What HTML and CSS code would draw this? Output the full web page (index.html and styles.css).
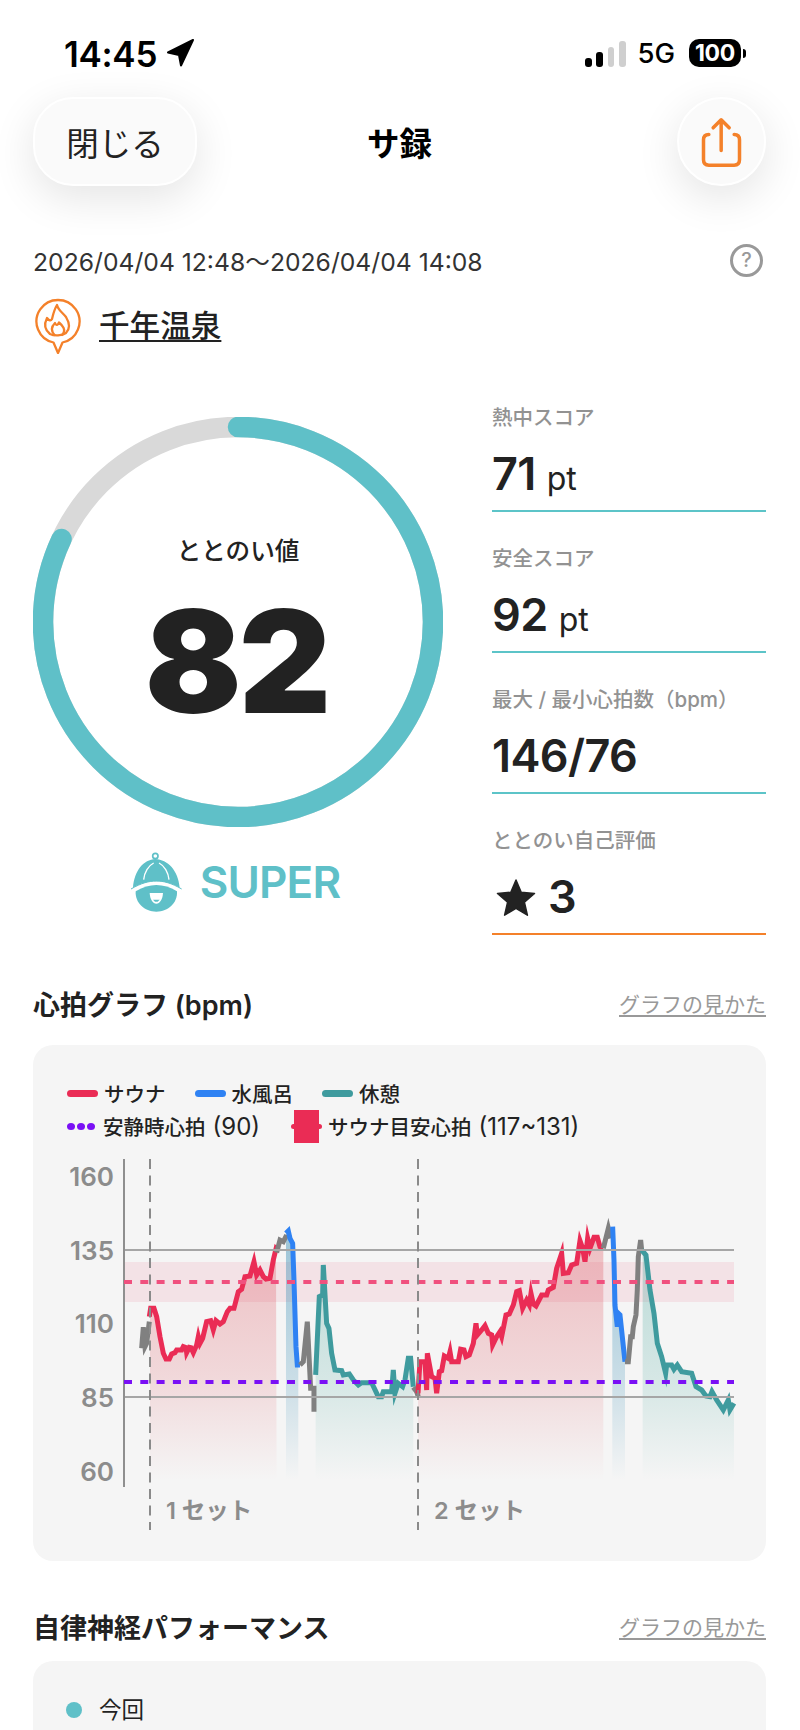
FILE: index.html
```html
<!DOCTYPE html>
<html lang="ja">
<head>
    <meta charset="UTF-8">
    <meta name="viewport" content="width=device-width, initial-scale=1.0">
    <title>サ録</title>
    <link rel="stylesheet" href="styles.css">
</head>
<body>
    <!-- Status bar -->
    <div class="status-bar">
        <div class="status-left">
            <span class="clock">14:45</span>
            <svg class="location" viewBox="0 0 32 32"><path d="M29 3 L4 15.500 L15 18 L17 28.500 Z"/></svg>
        </div>
        <div class="status-right">
            <div class="signal">
                <span class="bar bar-1"></span>
                <span class="bar bar-2"></span>
                <span class="bar bar-3 off"></span>
                <span class="bar bar-4 off"></span>
            </div>
            <span class="network">5G</span>
            <span class="battery">100</span>
            <span class="battery-nub"></span>
        </div>
    </div>

    <!-- Header -->
    <div class="nav">
        <button class="nav-close">閉じる</button>
        <div class="nav-title">サ録</div>
        <button class="nav-share">
            <svg viewBox="-7.500 -10.500 210 210" width="70" height="70">
                <path d="M58 72 H58 Q42 72 42 88 V148 Q42 164 58 164 H134 Q150 164 150 148 V88 Q150 72 134 72" class="share-line"/>
                <path d="M95 120 V30 M71 52 L95 28 L119 52" class="share-line"/>
            </svg>
        </button>
    </div>

    <div class="content">
        <div class="date-row">
            <span>2026/04/04 12:48～2026/04/04 14:08</span>
            <span class="help">?</span>
        </div>

        <div class="venue">
            <svg viewBox="0 0 46 56" width="46" height="56">
                <path class="pin" d="M23 55 L18.500 44.500 A21.500 21.500 0 1 1 27.500 44.500 Z"/>
                <path class="pin-flame" d="M22 7 C23 12 27 14 31 19 C34 24 36 30 31 35 C27 38 19 38 15 36 C10 32 9 26 12 20 C14 23 16 23 17 21 C18 17 19 12 22 7 Z"/>
                <path class="pin-flame" d="M19.500 37 C15 32 17 28 20 25 C21 28 23 27 24 24.500 C27 27 32 32 27 37"/>
            </svg>
            <a class="venue-name">千年温泉</a>
        </div>

        <!-- Score -->
        <div class="score">
            <div class="score-left">
                <div class="ring">
                    <svg class="ring-svg" viewBox="0 0 410 410">
                        <circle class="ring-track" cx="205" cy="205" r="195"/>
                        <circle class="ring-value" cx="205" cy="205" r="195" pathLength="100" stroke-dasharray="82 100" transform="rotate(-90 205 205)"/>
                    </svg>
                    <div class="ring-label">ととのい値</div>
                    <div class="ring-number">82</div>
                </div>
                <div class="rank">
                    <svg viewBox="0 0 210 210" width="70" height="70">
                        <circle class="hat-ball" cx="97" cy="27" r="8"/>
                        <path class="hat" d="M30 122 C34 70 62 38 97 36 C134 38 166 70 170 122 C145 108 122 103 100 103 C78 103 55 108 30 122 Z"/>
                        <path class="hat" d="M38 133 C60 120 80 114 100 114 C120 114 142 120 162 133 C164 168 136 194 100 194 C64 194 36 168 38 133 Z"/>
                        <path class="hat-brim" d="M24 126 C55 108 78 102 100 102 C122 102 145 108 176 126"/>
                        <path class="hat-seam" d="M62 98 C64 76 76 56 92 48 M138 98 C136 76 124 56 108 48"/>
                        <path class="hat-mouth" d="M80 138 H120 C119 158 110 170 100 170 C90 170 81 158 80 138 Z"/>
                        <path class="hat" d="M90 158 H110 L104 164 H96 Z"/>
                    </svg>
                    <span class="rank-name">SUPER</span>
                </div>
            </div>

            <div class="stats">
                <div class="stat">
                    <div class="stat-label">熱中スコア</div>
                    <div class="stat-value">71 <small>pt</small></div>
                </div>
                <div class="stat">
                    <div class="stat-label">安全スコア</div>
                    <div class="stat-value">92 <small>pt</small></div>
                </div>
                <div class="stat">
                    <div class="stat-label">最大 / 最小心拍数（bpm）</div>
                    <div class="stat-value">146/76</div>
                </div>
                <div class="stat stat-orange">
                    <div class="stat-label">ととのい自己評価</div>
                    <div class="stat-value">
                        <svg class="star" viewBox="0 0 40 40"><path d="M20 2 L25.200 14.300 L38.500 15.400 L28.400 24.100 L31.400 37.200 L20 30.300 L8.600 37.200 L11.600 24.100 L1.500 15.400 L14.800 14.300 Z"/></svg>
                        3
                    </div>
                </div>
            </div>
        </div>

        <!-- Heart rate graph -->
        <div class="section-head head-graph">
            <h2>心拍グラフ (bpm)</h2>
            <a class="graph-help">グラフの見かた</a>
        </div>
        <div class="card">
            <div class="legend">
                <div class="legend-row">
                    <span class="legend-item"><i class="swatch red"></i>サウナ</span>
                    <span class="legend-item"><i class="swatch blue"></i>水風呂</span>
                    <span class="legend-item"><i class="swatch teal"></i>休憩</span>
                </div>
                <div class="legend-row">
                    <span class="legend-item"><i class="dots"><b></b><b></b><b></b></i>安静時心拍<span class="legend-num">(90)</span></span>
                    <span class="legend-item"><i class="target"></i>サウナ目安心拍<span class="legend-num">(117~131)</span></span>
                </div>
            </div>
            <svg class="chart" viewBox="33 1150 733 411" width="733" height="411">
                <defs>
                    <linearGradient id="fillRed" gradientUnits="userSpaceOnUse" x1="0" y1="200" x2="0" y2="900">
                        <stop offset="0" stop-color="#d9323f" stop-opacity=".27"/>
                        <stop offset=".55" stop-color="#d9323f" stop-opacity=".15"/>
                        <stop offset="1" stop-color="#d9323f" stop-opacity="0"/>
                    </linearGradient>
                    <linearGradient id="fillBlue" gradientUnits="userSpaceOnUse" x1="0" y1="200" x2="0" y2="900">
                        <stop offset="0" stop-color="#2a86b0" stop-opacity=".42"/>
                        <stop offset=".6" stop-color="#2a86b0" stop-opacity=".2"/>
                        <stop offset="1" stop-color="#2a86b0" stop-opacity="0"/>
                    </linearGradient>
                    <linearGradient id="fillTeal" gradientUnits="userSpaceOnUse" x1="0" y1="200" x2="0" y2="900">
                        <stop offset="0" stop-color="#2f9c90" stop-opacity=".3"/>
                        <stop offset=".6" stop-color="#2f9c90" stop-opacity=".15"/>
                        <stop offset="1" stop-color="#2f9c90" stop-opacity="0"/>
                    </linearGradient>
                </defs>

                <rect class="band" x="124" y="1262" width="610" height="40"/>

                <!-- first set, points from left part -->
                <g transform="translate(30 1180) scale(.3333)">
                    <polygon fill="url(#fillRed)" points="360,410 362,385 372,385 380,410 390,470 400,520 408,537 418,537 425,522 435,518 440,510 455,510 460,500 468,503 470,518 478,502 483,503 490,518 500,495 505,470 510,490 518,475 530,425 542,422 550,450 558,422 570,432 580,425 592,395 600,385 612,385 625,335 635,328 645,290 660,288 672,245 680,285 690,270 700,290 708,297 720,295 730,240 738,207 740,900 360,900"/>
                    <polygon fill="url(#fillBlue)" points="768,160 775,153 780,175 788,190 792,300 798,500 805,555 805,900 768,900"/>
                    <polygon fill="url(#fillTeal)" points="857,585 868,350 878,345 880,255 890,430 897,445 905,520 915,570 935,572 940,585 958,582 970,600 985,615 995,608 1025,608 1045,650 1055,650 1060,635 1085,635 1090,570 1095,640 1105,610 1118,620 1125,600 1135,535 1142,535 1150,620 1150,900 857,900"/>
                    <polyline class="line gray" points="335,505 340,442 345,500 350,490 358,425"/>
                    <polyline class="line red" points="358,410 362,385 372,385 380,410 390,470 400,520 408,537 418,537 425,522 435,518 440,510 455,510 460,500 468,503 470,518 478,502 483,503 490,518 500,495 505,470 510,490 518,475 530,425 542,422 550,450 558,422 570,432 580,425 592,395 600,385 612,385 625,335 635,328 645,290 660,288 672,245 680,285 690,270 700,290 708,297 720,295 730,240 738,207 745,215"/>
                    <polyline class="line gray" points="740,218 750,180 760,185 770,165"/>
                    <polyline class="line blue" points="768,160 775,153 780,175 788,190 792,300 798,500 802,555 810,555"/>
                    <polyline class="line gray" points="810,555 820,545 832,425 842,625 852,625 852,695"/>
                    <polyline class="line teal" points="857,585 868,350 878,345 880,255 890,430 897,445 905,520 915,570 935,572 940,585 958,582 970,600 985,615 995,608 1025,608 1045,650 1055,650 1060,635 1085,635 1090,570 1095,640 1105,610 1118,620 1125,600 1135,535 1142,535 1150,620"/>
                    <polyline class="line gray" points="1150,622 1160,635 1165,650"/>
                </g>

                <!-- second set -->
                <g transform="translate(400 1180) scale(.3333)">
                    <polygon fill="url(#fillRed)" points="54,640 60,545 75,545 80,630 82,520 95,590 105,595 110,640 118,575 125,572 133,528 145,535 150,515 155,545 175,545 182,508 192,510 198,530 208,525 220,490 228,430 232,465 245,450 255,437 265,460 275,465 278,495 290,470 300,455 305,470 318,405 328,402 340,375 350,335 358,332 368,385 380,360 388,375 393,340 400,372 408,378 425,345 440,345 445,330 460,322 470,265 485,220 490,280 505,278 515,255 530,250 540,182 548,205 555,245 563,175 570,205 582,172 592,172 600,200 610,205 610,900 54,900"/>
                    <polygon fill="url(#fillBlue)" points="637,140 642,240 645,375 652,440 655,400 660,405 675,545 675,900 637,900"/>
                    <polygon fill="url(#fillTeal)" points="728,210 738,225 750,330 762,400 772,490 785,530 797,580 800,555 815,555 822,568 832,555 845,575 875,580 888,620 905,630 918,648 930,650 936,635 950,660 970,690 985,660 990,690 1002,670 1002,900 728,900"/>
                    <polyline class="line red" points="54,640 60,545 75,545 80,630 82,520 95,590 105,595 110,640 118,575 125,572 133,528 145,535 150,515 155,545 175,545 182,508 192,510 198,530 208,525 220,490 228,430 232,465 245,450 255,437 265,460 275,465 278,495 290,470 300,455 305,470 318,405 328,402 340,375 350,335 358,332 368,385 380,360 388,375 393,340 400,372 408,378 425,345 440,345 445,330 460,322 470,265 485,220 490,280 505,278 515,255 530,250 540,182 548,205 555,245 563,175 570,205 582,172 592,172 600,200 610,205"/>
                    <polyline class="line gray" points="610,205 625,145 632,175"/>
                    <polyline class="line blue" points="638,140 642,240 645,375 652,440 655,400 660,405 675,545"/>
                    <polyline class="line gray" points="675,545 685,545 692,470 697,470 700,440 708,405 712,330 715,230 722,180 725,210"/>
                    <polyline class="line teal" points="725,210 738,225 750,330 762,400 772,490 785,530 797,580 800,555 815,555 822,568 832,555 845,575 875,580 888,620 905,630 918,648 930,650 936,635 950,660 970,690 985,660 990,690 1002,670"/>
                </g>

                <line class="grid" x1="124" y1="1250" x2="734" y2="1250"/>
                <line class="grid" x1="124" y1="1397" x2="734" y2="1397"/>
                <line class="axis" x1="124" y1="1159" x2="124" y2="1487"/>
                <line class="limit-target" x1="124" y1="1282" x2="734" y2="1282"/>
                <line class="limit-rest" x1="124" y1="1382" x2="734" y2="1382"/>
                <line class="set-line" x1="150" y1="1159" x2="150" y2="1530"/>
                <line class="set-line" x1="418" y1="1159" x2="418" y2="1530"/>

                <text class="tick" x="114" y="1186">160</text>
                <text class="tick" x="114" y="1260">135</text>
                <text class="tick" x="114" y="1333">110</text>
                <text class="tick" x="114" y="1407">85</text>
                <text class="tick" x="114" y="1481">60</text>
                <text class="set-name" x="166" y="1519">1 セット</text>
                <text class="set-name" x="434" y="1519">2 セット</text>
            </svg>
        </div>

        <!-- Autonomic performance -->
        <div class="section-head head-nerve">
            <h2>自律神経パフォーマンス</h2>
            <a class="graph-help">グラフの見かた</a>
        </div>
        <div class="card card-nerve">
            <div class="now"><i class="now-dot"></i>今回</div>
        </div>
    </div>
</body>
</html>
```

FILE: styles.css
```css
* {
    box-sizing: border-box;
}
html, body {
    height: 1730px;
    overflow: hidden;
}
body {
    margin: 0;
    background-color: #fff;
    color: #222;
    font-family: "Inter", "Noto Sans CJK JP", sans-serif;
}

/* status bar */
.status-bar {
    height: 97px;
    padding: 39px 54px 0 64px;
    display: flex;
    justify-content: space-between;
    align-items: flex-start;
    color: #000;
}
.status-left {
    display: flex;
    align-items: center;
    height: 28px;
}
.clock {
    font-size: 35px;
    font-weight: 600;
    line-height: 28px;
    letter-spacing: -0.3px;
    margin-top: 2px;
}
.location {
    width: 32px;
    height: 32px;
    margin-left: 7px;
}
.location path {
    fill: #000;
    stroke: #000;
    stroke-width: 2;
    stroke-linejoin: round;
}
.status-right {
    display: flex;
    align-items: center;
    height: 28px;
}
.signal {
    display: flex;
    align-items: flex-end;
    gap: 4px;
    height: 26px;
    margin-top: 1px;
}
.bar {
    width: 7px;
    border-radius: 3px;
    background-color: #000;
}
.bar-1 { height: 9px; }
.bar-2 { height: 15px; }
.bar-3 { height: 20px; margin-left: 1px; width: 6px; }
.bar-4 { height: 26px; margin-left: 1px; }
.off {
    background-color: #cfcfcf;
}
.network {
    margin-left: 11px;
    font-size: 27.500px;
    font-weight: 500;
}
.battery {
    margin-left: 14px;
    width: 52px;
    height: 28px;
    border-radius: 10px;
    background-color: #000;
    color: #fff;
    font-size: 23px;
    font-weight: 700;
    line-height: 28px;
    letter-spacing: -0.3px;
    text-align: center;
}
.battery-nub {
    width: 3px;
    height: 9px;
    margin-left: 2px;
    border-radius: 0 4px 4px 0;
    background-color: #000;
}

/* header */
.nav {
    height: 89px;
    padding: 0 34px 0 33px;
    display: grid;
    grid-template-columns: 1fr auto 1fr;
    align-items: center;
}
button {
    height: 89px;
    border: 2px solid #fff;
    background-color: #fafafa;
    box-shadow: 0 12px 44px rgba(0, 0, 0, 0.11);
    font-family: inherit;
    color: #222;
    padding: 0;
}
.nav-close {
    width: 164px;
    border-radius: 40px;
    font-size: 32.500px;
    justify-self: start;
}
.nav-title {
    font-size: 32.500px;
    font-weight: 700;
    color: #000;
}
.nav-share {
    width: 89px;
    border-radius: 50%;
    justify-self: end;
    display: flex;
    align-items: center;
    justify-content: center;
}
.share-line {
    fill: none;
    stroke: #f4812a;
    stroke-width: 10.500;
    stroke-linecap: round;
    stroke-linejoin: round;
}

.content {
    padding: 0 34px 0 33px;
}
.date-row {
    margin-top: 58px;
    height: 32px;
    display: flex;
    justify-content: space-between;
    align-items: center;
    font-size: 24.700px;
    color: #333;
}
.help {
    width: 33px;
    height: 33px;
    margin-right: 3px;
    border: 3px solid #999;
    border-radius: 50%;
    color: #999;
    font-size: 20px;
    font-weight: 500;
    line-height: 27px;
    text-align: center;
}
.venue {
    margin-top: 22px;
    display: flex;
    align-items: center;
    gap: 18px;
    margin-left: 2px;
}
.pin, .pin-flame {
    fill: none;
    stroke: #f4812a;
    stroke-width: 2.300;
    stroke-linejoin: round;
    stroke-linecap: round;
}
.venue-name {
    font-size: 30.600px;
    font-weight: 500;
    line-height: 40px;
    text-decoration: underline;
    text-decoration-thickness: 2px;
    text-underline-offset: 3px;
}

/* score */
.score {
    margin-top: 17px;
    display: flex;
    gap: 49px;
}
.score-left {
    width: 410px;
    padding-top: 46px;
}
.ring {
    position: relative;
    width: 410px;
    height: 410px;
    display: flex;
    flex-direction: column;
    align-items: center;
}
.ring-svg {
    position: absolute;
    left: 0;
    top: 0;
}
.ring-track, .ring-value {
    fill: none;
    stroke-width: 20.500;
}
.ring-track {
    stroke: #d9d9d9;
}
.ring-value {
    stroke: #5fc0c8;
    stroke-linecap: round;
}
.ring-label {
    margin-top: 116px;
    font-size: 24.600px;
    font-weight: 500;
    line-height: 36px;
}
.ring-number {
    margin-top: 32px;
    font-size: 143px;
    font-weight: 900;
    line-height: 120px;
    letter-spacing: -3px;
    margin-right: 3px;
}
.rank {
    margin-top: 20px;
    padding-right: 13px;
    display: flex;
    justify-content: center;
    align-items: center;
    gap: 7px;
}
.rank-name {
    font-size: 44px;
    font-weight: 600;
    color: #5fc0c8;
    letter-spacing: -0.8px;
}
.hat, .hat-ball {
    fill: #5fc0c8;
}
.hat-ball {
    fill: none;
    stroke: #5fc0c8;
    stroke-width: 5;
}
.hat-brim {
    fill: none;
    stroke: #5fc0c8;
    stroke-width: 3;
}
.hat-seam {
    fill: none;
    stroke: #fff;
    stroke-width: 4;
}
.hat-mouth {
    fill: #fff;
}

.stats {
    width: 275px;
}
.stat {
    height: 141px;
    padding-top: 33px;
    border-bottom: 2px solid #5cc4c8;
}
.stat-orange {
    border-bottom-color: #f4812a;
}
.stat-label {
    font-size: 20.500px;
    font-weight: 500;
    line-height: 28px;
    color: #929292;
    white-space: nowrap;
}
.stat-value {
    margin-top: 17px;
    height: 50px;
    display: flex;
    align-items: baseline;
    gap: 11px;
    font-size: 45px;
    font-weight: 600;
    line-height: 50px;
    letter-spacing: -0.6px;
}
.stat-value small {
    font-size: 32px;
    font-weight: 400;
    letter-spacing: 0;
}
.star {
    width: 40px;
    height: 40px;
    align-self: center;
    margin: 2px 1px 0 4px;
}
.star path {
    fill: #222;
    stroke: #222;
    stroke-width: 1.500;
    stroke-linejoin: round;
}

/* sections */
.section-head {
    height: 36px;
    display: flex;
    justify-content: space-between;
    align-items: center;
}
.head-graph {
    margin-top: 50px;
}
.head-nerve {
    margin-top: 47px;
}
.section-head h2 {
    margin: 0;
    font-size: 27px;
    font-weight: 600;
}
.graph-help {
    font-size: 21px;
    color: #999;
    text-decoration: underline;
    text-underline-offset: 3px;
}
.card {
    margin-top: 24px;
    height: 516px;
    border-radius: 20px;
    background-color: #f5f5f5;
}
.card-nerve {
    margin-top: 17px;
    height: 200px;
    padding: 34px 0 0 33px;
}
.now {
    display: flex;
    align-items: center;
    gap: 17px;
    font-size: 22.500px;
    line-height: 30px;
}
.now-dot {
    width: 16px;
    height: 16px;
    border-radius: 50%;
    background-color: #5fc0c8;
}

/* legend */
.legend {
    height: 105px;
    padding: 34px 0 0 34px;
    color: #222;
    font-size: 20.500px;
    font-weight: 500;
}
.legend-row {
    display: flex;
    height: 28px;
    margin-bottom: 5px;
}
.legend-item {
    display: flex;
    align-items: center;
    white-space: nowrap;
    margin-right: 29px;
}
.legend-num {
    margin-left: 7px;
    font-size: 24px;
    font-weight: 400;
}
.swatch {
    width: 31px;
    height: 7px;
    margin-right: 6px;
    border-radius: 4px;
}
.swatch.red { background-color: #ea2c55; }
.swatch.blue { background-color: #2f82f3; }
.swatch.teal { background-color: #3f9b9e; }
.dots {
    display: flex;
    gap: 2px;
    width: 29px;
    margin-right: 7px;
}
.dots b {
    width: 8px;
    height: 7px;
    border-radius: 50%;
    background-color: #7a10f5;
}
.target {
    position: relative;
    width: 25px;
    height: 33px;
    margin: 0 9px 0 5px;
    background-color: #ea2c55;
}
.target::before {
    content: "";
    position: absolute;
    left: -3px;
    right: -3px;
    top: 14px;
    height: 5px;
    border-radius: 3px;
    background-color: #ea2c55;
}

/* chart */
.chart {
    display: block;
}
.band {
    fill: #ea2c55;
    fill-opacity: 0.09;
}
.line {
    fill: none;
    stroke-width: 15;
    stroke-linejoin: miter;
    stroke-miterlimit: 6;
}
.line.red { stroke: #ea2c55; }
.line.blue { stroke: #2f82f3; }
.line.teal { stroke: #3f9b9e; }
.line.gray { stroke: #808080; }
.grid {
    stroke: #a6a6a6;
    stroke-width: 2;
}
.axis {
    stroke: #8f8f8f;
    stroke-width: 2;
}
.limit-target {
    stroke: #f0507e;
    stroke-width: 4;
    stroke-dasharray: 8 8.300;
}
.limit-rest {
    stroke: #7a10f5;
    stroke-width: 4;
    stroke-dasharray: 8 8.300;
}
.set-line {
    stroke: #8a8a8a;
    stroke-width: 2;
    stroke-dasharray: 10 6.500;
}
.tick {
    font-size: 26px;
    font-weight: 600;
    fill: #8c8c8c;
    text-anchor: end;
}
.set-name {
    font-size: 23.500px;
    font-weight: 600;
    fill: #8c8c8c;
}
```
